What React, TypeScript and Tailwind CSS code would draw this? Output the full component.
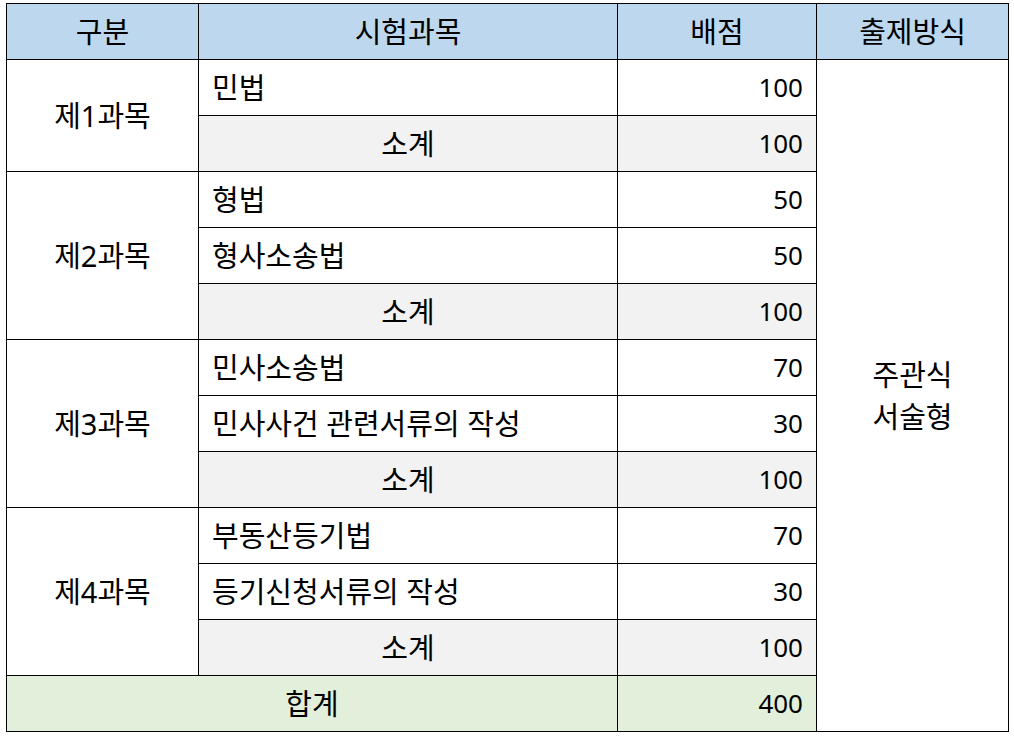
const font = { fontFamily: '"Noto Sans", "Noto Sans CJK KR", sans-serif' };

type Row = { name: string; score: number; subtotal?: boolean };

const groups: { label: string; rows: Row[] }[] = [
  { label: "제1과목", rows: [{ name: "민법", score: 100 }, { name: "소계", score: 100, subtotal: true }] },
  {
    label: "제2과목",
    rows: [
      { name: "형법", score: 50 },
      { name: "형사소송법", score: 50 },
      { name: "소계", score: 100, subtotal: true },
    ],
  },
  {
    label: "제3과목",
    rows: [
      { name: "민사소송법", score: 70 },
      { name: "민사사건 관련서류의 작성", score: 30 },
      { name: "소계", score: 100, subtotal: true },
    ],
  },
  {
    label: "제4과목",
    rows: [
      { name: "부동산등기법", score: 70 },
      { name: "등기신청서류의 작성", score: 30 },
      { name: "소계", score: 100, subtotal: true },
    ],
  },
];

const totalRows = groups.reduce((n, g) => n + g.rows.length, 0) + 1;

// hangul cells get a bigger size than digit cells
const ko = "border border-black text-[29px] font-normal";
const num = "border border-black pr-[13px] text-right text-[26px]";

export default function App() {
  return (
    <div className="min-h-[741px] bg-white pl-[6px] pt-[3px]" style={font}>
      <table className="w-[1002px] table-fixed border-collapse text-black">
        <colgroup>
          <col className="w-[192px]" />
          <col className="w-[419px]" />
          <col className="w-[199px]" />
          <col className="w-[192px]" />
        </colgroup>
        <thead>
          <tr className="h-[56px] bg-[#bdd7ee]">
            <th className={ko}>구분</th>
            <th className={ko}>시험과목</th>
            <th className={ko}>배점</th>
            <th className={ko}>출제방식</th>
          </tr>
        </thead>
        <tbody>
          {groups.map((g, gi) =>
            g.rows.map((r, ri) => (
              <tr key={`${gi}-${ri}`} className="h-[56px]">
                {ri === 0 && (
                  <td rowSpan={g.rows.length} className={`${ko} text-center`}>
                    {g.label}
                  </td>
                )}
                {r.subtotal ? (
                  <td className={`${ko} bg-[#f2f2f2] text-center`}>{r.name}</td>
                ) : (
                  <td className={`${ko} pl-[13px] text-left`}>{r.name}</td>
                )}
                <td className={`${num} ${r.subtotal ? "bg-[#f2f2f2]" : ""}`}>{r.score}</td>
                {gi === 0 && ri === 0 && (
                  <td rowSpan={totalRows} className={`${ko} text-center leading-[42px]`}>
                    주관식
                    <br />
                    서술형
                  </td>
                )}
              </tr>
            ))
          )}
          <tr className="h-[56px] bg-[#e2efda]">
            <td colSpan={2} className={`${ko} text-center`}>
              합계
            </td>
            <td className={num}>400</td>
          </tr>
        </tbody>
      </table>
    </div>
  );
}
